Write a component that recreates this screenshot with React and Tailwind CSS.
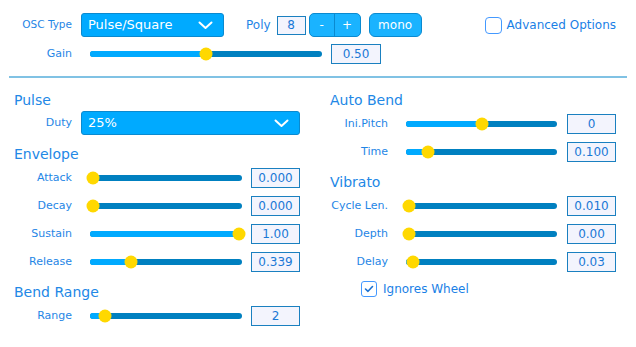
import React from "react";

const Chevron = () => (
  <svg width="15" height="9" viewBox="0 0 15 9" fill="none">
    <path d="M1.5 1.5 L7.5 7 L13.5 1.5" stroke="white" strokeWidth="2" strokeLinecap="round" strokeLinejoin="round" />
  </svg>
);

const Slider = ({ width, value }) => {
  const pos = 3 + value * (width - 6);
  return (
    <div className="relative h-[6px] rounded-full bg-[#0080c0]" style={{ width }}>
      <div className="absolute left-0 top-0 h-[6px] rounded-full bg-[#00aaff]" style={{ width: pos }} />
      <div
        className="absolute top-1/2 h-[13px] w-[13px] -translate-x-1/2 -translate-y-1/2 rounded-full bg-[#ffd800]"
        style={{ left: pos }}
      />
    </div>
  );
};

const ValueBox = ({ value, w = "w-[49px]" }) => (
  <div
    className={`${w} h-[20px] border border-[#1a80c0] bg-[#f3f4fd] text-[12px] text-[#1a78d6] flex items-center justify-center`}
  >
    {value}
  </div>
);

const Row = ({ label, labelW, trackW, trackMl, boxMl, value, frac }) => (
  <div className="flex h-[28px] items-center">
    <div className={`${labelW} text-right text-[11px] text-[#1f86e6]`}>{label}</div>
    <div className={trackMl}>
      <Slider width={trackW} value={frac} />
    </div>
    <div className={boxMl}>
      <ValueBox value={value} />
    </div>
  </div>
);

const Heading = ({ children, className }) => (
  <div className={`flex items-center text-[14px] text-[#2288e6] ${className}`}>{children}</div>
);

export default function App() {
  return (
    <div className="w-[636px] h-[347px] bg-white font-['DejaVu_Sans',sans-serif] overflow-hidden">
      {/* top bar */}
      <div className="flex h-[24px] mt-[13px] items-center">
        <div className="w-[72px] text-right text-[10.5px] text-[#1f86e6]">OSC Type</div>
        <div className="ml-[9px] flex h-[24px] w-[143px] items-center justify-between rounded-[3px] border border-[#0a8ad0] bg-[#00aaff] pl-[6px] pr-[10px] text-[13px] text-white">
          <span>Pulse/Square</span>
          <Chevron />
        </div>
        <div className="ml-[22px] text-[12px] text-[#1f86e6]">Poly</div>
        <div className="ml-[6px] flex h-[19px] w-[29px] items-center justify-center border border-[#1a80c0] bg-[#f3f4fd] text-[12px] text-[#1a78d6]">
          8
        </div>
        <div className="ml-[3px] flex h-[24px] w-[52px] overflow-hidden rounded-[5px] border border-[#0a8ad0] bg-[#1ab3ff] text-[12px] text-white">
          <div className="flex w-[25px] items-center justify-center border-r border-[#0a8ad0]">-</div>
          <div className="flex flex-1 items-center justify-center">+</div>
        </div>
        <div className="ml-[8px] flex h-[24px] w-[53px] items-center justify-center rounded-[6px] border border-[#0a8ad0] bg-[#1ab3ff] text-[12px] text-white">
          mono
        </div>
        <div className="ml-[63px] h-[17px] w-[17px] rounded-[4px] border-[1.5px] border-[#4499ff] bg-white" />
        <div className="ml-[5px] text-[12px] text-[#1a7fe6]">Advanced Options</div>
      </div>
      <div className="flex h-[20px] mt-[7px] items-center">
        <div className="w-[72px] text-right text-[11px] text-[#1f86e6]">Gain</div>
        <div className="ml-[18px]">
          <Slider width={232} value={0.5} />
        </div>
        <div className="ml-[9px]">
          <ValueBox value="0.50" w="w-[50px]" />
        </div>
      </div>
      <div className="mx-[9px] mt-[12px] h-[2px] bg-[#80c2e4]" />

      {/* main */}
      <div className="flex pt-[12px]">
        {/* left column */}
        <div className="w-[320px] pl-[14px]">
          <Heading className="h-[21px]">Pulse</Heading>
          <div className="flex h-[24px] items-center">
            <div className="w-[58px] text-right text-[11px] text-[#1f86e6]">Duty</div>
            <div className="ml-[9px] flex h-[24px] w-[219px] items-center justify-between rounded-[3px] border border-[#0a8ad0] bg-[#00aaff] pl-[6px] pr-[10px] text-[13px] text-white">
              <span>25%</span>
              <Chevron />
            </div>
          </div>
          <Heading className="h-[20px] mt-[9px]">Envelope</Heading>
          <Row label="Attack" labelW="w-[58px]" trackMl="ml-[18px]" trackW={152} boxMl="ml-[9px]" value="0.000" frac={0} />
          <Row label="Decay" labelW="w-[58px]" trackMl="ml-[18px]" trackW={152} boxMl="ml-[9px]" value="0.000" frac={0} />
          <Row label="Sustain" labelW="w-[58px]" trackMl="ml-[18px]" trackW={152} boxMl="ml-[9px]" value="1.00" frac={1} />
          <Row label="Release" labelW="w-[58px]" trackMl="ml-[18px]" trackW={152} boxMl="ml-[9px]" value="0.339" frac={0.26} />
          <Heading className="h-[19px] mt-[7px]">Bend Range</Heading>
          <Row label="Range" labelW="w-[58px]" trackMl="ml-[18px]" trackW={152} boxMl="ml-[9px]" value="2" frac={0.082} />
        </div>

        {/* right column */}
        <div className="pl-[10px]">
          <Heading className="h-[20px]">Auto Bend</Heading>
          <Row label="Ini.Pitch" labelW="w-[58px]" trackMl="ml-[18px]" trackW={151} boxMl="ml-[10px]" value="0" frac={0.503} />
          <Row label="Time" labelW="w-[58px]" trackMl="ml-[18px]" trackW={151} boxMl="ml-[10px]" value="0.100" frac={0.13} />
          <Heading className="h-[20px] mt-[6px]">Vibrato</Heading>
          <Row label="Cycle Len." labelW="w-[58px]" trackMl="ml-[18px]" trackW={151} boxMl="ml-[10px]" value="0.010" frac={0} />
          <Row label="Depth" labelW="w-[58px]" trackMl="ml-[18px]" trackW={151} boxMl="ml-[10px]" value="0.00" frac={0} />
          <Row label="Delay" labelW="w-[58px]" trackMl="ml-[18px]" trackW={151} boxMl="ml-[10px]" value="0.03" frac={0.03} />
          <div className="flex h-[26px] items-center pl-[31px]">
            <div className="flex h-[16px] w-[16px] items-center justify-center rounded-[3px] border-[1.5px] border-[#4499ff] bg-white">
              <svg width="10" height="8" viewBox="0 0 10 8" fill="none">
                <path d="M1.5 4 L4 6.3 L8.5 1.5" stroke="#1a70d0" strokeWidth="1.6" strokeLinecap="round" strokeLinejoin="round" />
              </svg>
            </div>
            <div className="ml-[6px] text-[12px] text-[#1a7fe6]">Ignores Wheel</div>
          </div>
        </div>
      </div>
    </div>
  );
}
